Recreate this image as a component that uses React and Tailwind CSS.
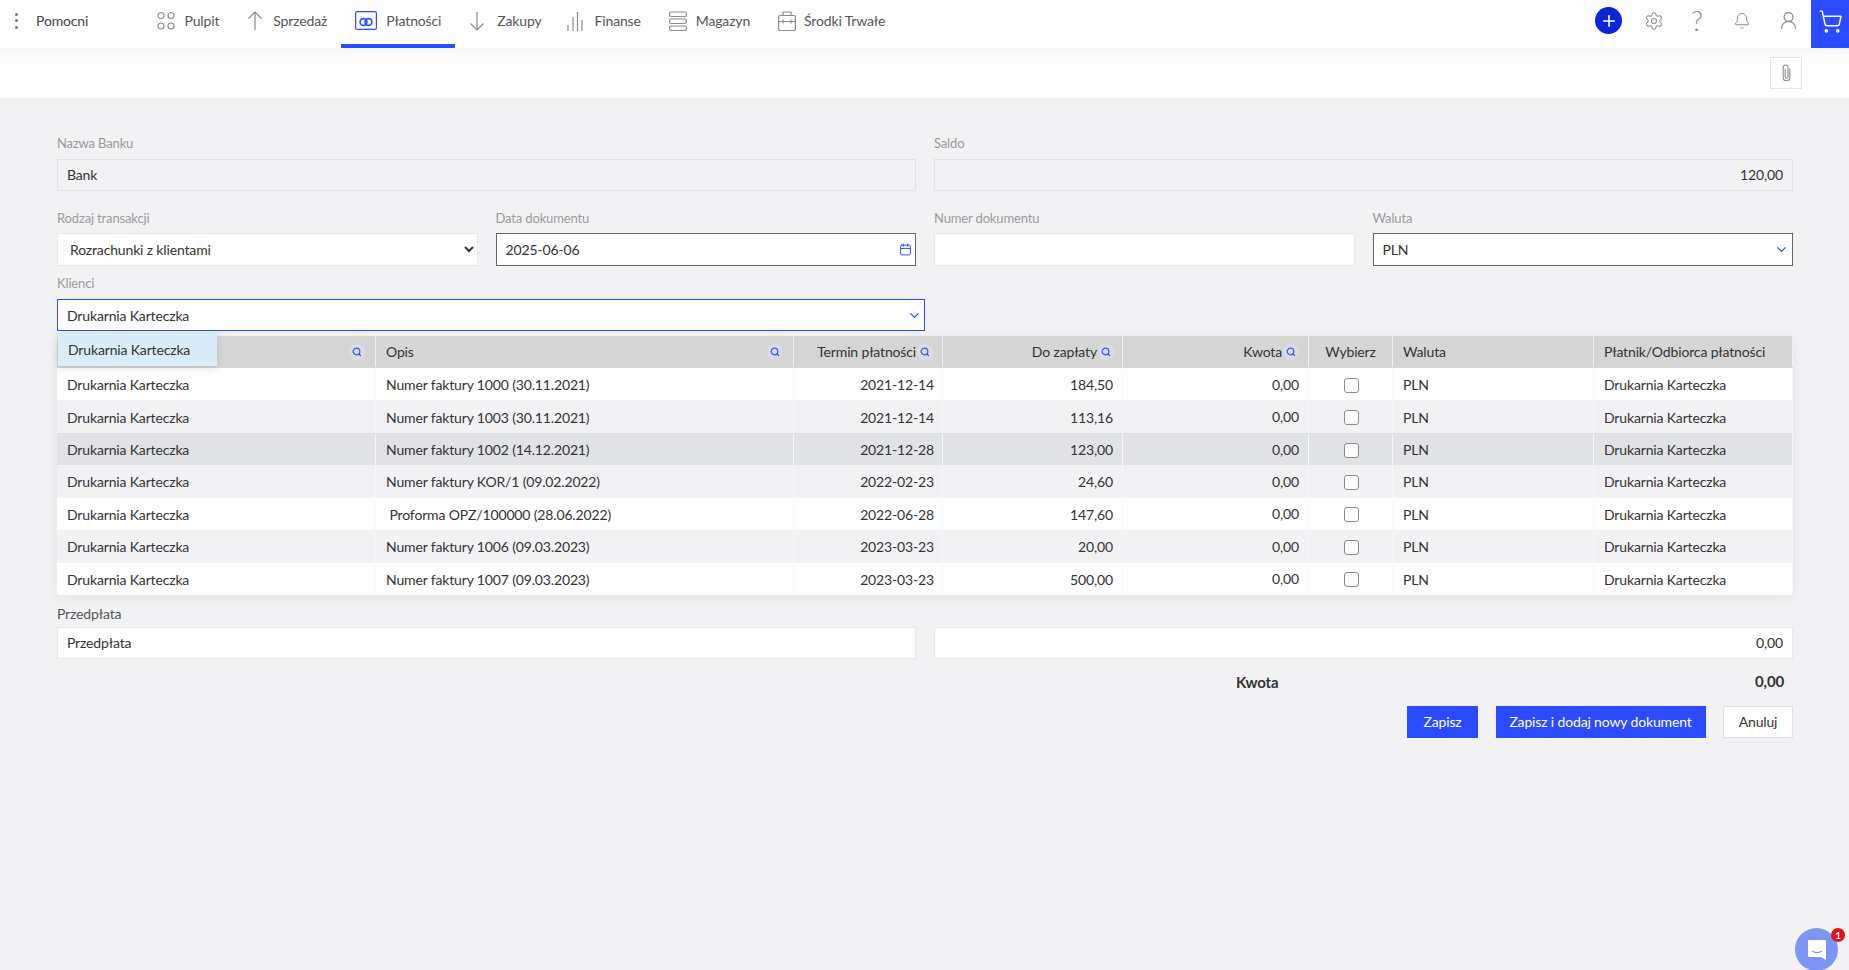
import React from "react";
import { Settings, Bell, ShoppingCart, Plus, ChevronDown, Calendar, UserRound } from "lucide-react";

const rows = [
    { opis: "Numer faktury 1000 (30.11.2021)", termin: "2021-12-14", kwota: "184,50" },
    { opis: "Numer faktury 1003 (30.11.2021)", termin: "2021-12-14", kwota: "113,16" },
    { opis: "Numer faktury 1002 (14.12.2021)", termin: "2021-12-28", kwota: "123,00" },
    { opis: "Numer faktury KOR/1 (09.02.2022)", termin: "2022-02-23", kwota: "24,60" },
    { opis: "\u00a0Proforma OPZ/100000 (28.06.2022)", termin: "2022-06-28", kwota: "147,60" },
    { opis: "Numer faktury 1006 (09.03.2023)", termin: "2023-03-23", kwota: "20,00" },
    { opis: "Numer faktury 1007 (09.03.2023)", termin: "2023-03-23", kwota: "500,00" },
];

const grid = "grid grid-cols-[319px_418px_149px_180px_186px_84px_201px_199px]";

function Ico({ w = 18, children }) {
    return (
        <svg width={w} height="20" viewBox={`0 0 ${w} 20`} fill="none" stroke="#8c8c8c" strokeWidth="1.2" className="shrink-0">
            {children}
        </svg>
    );
}

function NavItem({ icon, label, active, className = "gap-[10px] pl-[14px]" }) {
    return (
        <div className={`relative flex h-12 items-center pb-[7px] pr-[14px] text-[#555] ${className}`}>
            {icon}
            <span>{label}</span>
            {active && <div className="absolute bottom-0 left-0 right-0 h-1 bg-[#2b4bff]" />}
        </div>
    );
}

function Q() {
    return (
        <span className="flex h-4 w-4 items-center justify-center rounded-full bg-[#dbdde6]">
            <svg width="10" height="10" viewBox="0 0 10 10" fill="none" stroke="#3b5bff" strokeWidth="1.3">
                <circle cx="4.500" cy="4.500" r="3.300" />
                <path d="M6.500 6.500 9 9" />
            </svg>
        </span>
    );
}

function Label({ children, className = "" }) {
    return <div className={`flex items-center pb-[5px] text-[13px] text-[#999] ${className}`}>{children}</div>;
}

function Box({ className = "", children }) {
    return <div className={`flex items-center border px-[9px] ${className}`}>{children}</div>;
}

export default function App() {
    return (
        <div className="min-h-[970px] bg-[#f2f2f5] font-['Lato',sans-serif] text-[14px] tracking-[-0.15px] text-[#333]">
            <nav className="flex h-12 items-center bg-[#fdfdfd]">
                <div className="flex w-[142.5px] items-center pb-[7px]">
                    <div className="ml-[15px] flex w-[21px] flex-col gap-[3.5px]">
                        <span className="h-[3px] w-[3px] rounded-full bg-[#777]" />
                        <span className="h-[3px] w-[3px] rounded-full bg-[#777]" />
                        <span className="h-[3px] w-[3px] rounded-full bg-[#777]" />
                    </div>
                    <span className="text-[#444]">Pomocni</span>
                </div>
                <NavItem label="Pulpit" icon={
                    <Ico w={18}>
                        <circle cx="4" cy="4.500" r="3" /><circle cx="14" cy="4.500" r="3" />
                        <circle cx="4" cy="15" r="3" /><circle cx="14" cy="15" r="3" />
                    </Ico>
                } />
                <NavItem label="Sprzedaż" icon={
                    <Ico w={16}><path d="M8 19V1M1.500 7.500 8 1l6.500 6.500" /></Ico>
                } />
                <NavItem active label="Płatności" className="gap-[9px] pl-[14px]" icon={
                    <svg width="22" height="19" viewBox="0 0 22 19" fill="none" stroke="#2b4bff" strokeWidth="1.2" className="shrink-0">
                        <rect x="0.6" y="0.6" width="20.800" height="17.800" rx="1.500" />
                        <circle cx="8.500" cy="11" r="3.400" strokeWidth="1.600" />
                        <circle cx="13.500" cy="11" r="3.400" strokeWidth="1.600" />
                    </svg>
                } />
                <NavItem label="Zakupy" className="gap-[12px] pl-[14px]" icon={
                    <Ico w={16}><path d="M8 1v18M1.500 12.500 8 19l6.500-6.500" /></Ico>
                } />
                <NavItem label="Finanse" className="gap-[12px] pl-[11px]" icon={
                    <Ico w={16}><path d="M1 14v6M6 6v14M10.500 1v19M15 9v11" /></Ico>
                } />
                <NavItem label="Magazyn" className="gap-[9px] pl-[14px]" icon={
                    <Ico w={18}>
                        <rect x="0.6" y="1" width="16.800" height="4.500" rx="1.500" />
                        <rect x="0.6" y="8" width="16.800" height="4.500" rx="1.500" />
                        <rect x="0.6" y="15" width="16.800" height="4.500" rx="1.500" />
                    </Ico>
                } />
                <NavItem label="Środki Trwałe" className="gap-[8px] pl-[14px]" icon={
                    <Ico w={18}>
                        <rect x="0.6" y="4.500" width="16.800" height="15" rx="1.500" />
                        <path d="M5 4.500V1h8v3.500M1 10.500h16M5 8.500v4M13 8.500v4" />
                    </Ico>
                } />
                <div className="ml-auto flex items-center">
                    <div className="mb-[7px] mr-[9px] flex h-[27px] w-[27px] items-center justify-center rounded-full bg-[#0a26d6]">
                        <Plus size={18} color="#fff" strokeWidth={2.2} />
                    </div>
                    <div className="mb-[7px] flex w-[45px] justify-center"><Settings size={20} color="#8c8c8c" strokeWidth={1.3} /></div>
                    <div className="mb-[7px] flex w-[42px] justify-center text-[27px] font-light leading-none text-[#8c8c8c]">?</div>
                    <div className="mb-[7px] flex w-[48px] justify-center"><Bell size={18} color="#8c8c8c" strokeWidth={1.3} /></div>
                    <div className="mb-[7px] flex w-[45px] justify-center"><UserRound size={21} color="#8c8c8c" strokeWidth={1.4} /></div>
                    <div className="flex h-12 w-[38px] items-center justify-center bg-[#2b4bff] pb-[5px]">
                        <ShoppingCart size={25} color="#fff" strokeWidth={1.4} />
                    </div>
                </div>
            </nav>

            <div className="flex h-[50px] items-start justify-end bg-[linear-gradient(#f6f6f7,#fdfdfd_12px)] pr-[47px] pt-[9px]">
                <div className="flex h-8 w-8 items-center justify-center border border-[#e2e2e6] bg-[#fdfdfd]">
                    <svg width="9" height="18" viewBox="0 0 9 18" fill="none" stroke="#8c8c8c" strokeWidth="1.1">
                        <path d="M7.800 4.500v9a3.300 3.300 0 0 1-6.600 0V3.400a2.400 2.400 0 0 1 4.800 0v9.400a1.400 1.400 0 0 1-2.800 0V5" />
                    </svg>
                </div>
            </div>

            <main className="pl-[57px] pr-[56px] pt-[36px]">
                <div className="grid grid-cols-4 gap-x-[18px]">
                    <div className="col-span-2">
                        <Label className="h-[25px]">Nazwa Banku</Label>
                        <Box className="h-8 border-[#e2e2e6] bg-[#f2f2f5] pb-[2px]">Bank</Box>
                    </div>
                    <div className="col-span-2">
                        <Label className="h-[25px]">Saldo</Label>
                        <Box className="h-8 justify-end border-[#e2e2e6] bg-[#f2f2f5] pb-[2px]">120,00</Box>
                    </div>
                </div>

                <div className="mt-[18px] grid grid-cols-4 gap-x-[18px]">
                    <div>
                        <Label className="h-6">Rodzaj transakcji</Label>
                        <select className="h-[33px] w-full rounded-[2px] border border-[#e8e8ec] bg-[#fdfdfd] pl-2 pr-1 text-[#333]">
                            <option>Rozrachunki z klientami</option>
                        </select>
                    </div>
                    <div>
                        <Label className="h-6">Data dokumentu</Label>
                        <Box className="h-[33px] justify-between border-[#666] bg-[#fdfdfd] pr-[3px]">
                            2025-06-06
                            <Calendar size={13} color="#2b4bff" strokeWidth={1.8} />
                        </Box>
                    </div>
                    <div>
                        <Label className="h-6">Numer dokumentu</Label>
                        <Box className="h-[33px] rounded-[2px] border-[#e8e8ec] bg-[#fdfdfd]" />
                    </div>
                    <div>
                        <Label className="h-6">Waluta</Label>
                        <Box className="h-[33px] justify-between border-[#666] bg-[#fdfdfd] pr-[3px]">
                            PLN
                            <ChevronDown size={15} color="#2b4bff" strokeWidth={2} />
                        </Box>
                    </div>
                </div>

                <Label className="mt-[7px] h-[26px]">Klienci</Label>
                <div className="relative w-[868px]">
                    <Box className="h-8 justify-between border-[#2b4bff] bg-[#fdfdfd] pr-[2px]">
                        Drukarnia Karteczka
                        <ChevronDown size={15} color="#2b4bff" strokeWidth={2} />
                    </Box>
                    <div className="absolute left-[1px] top-[33px] z-10 flex h-[34px] w-[159px] items-center bg-[#d9edf9] pl-[10px] text-[#333] shadow-[0_2px_8px_rgba(0,0,0,0.12)]">
                        Drukarnia Karteczka
                    </div>
                </div>

                <div className="mt-[5px] overflow-hidden rounded-[3px] shadow-[0_3px_12px_rgba(0,0,0,0.06)]">
                    <div className={`${grid} h-8 bg-[#d5d5d5] pb-[1px] text-[#333] [&>div]:flex [&>div]:items-center [&>div]:border-r [&>div]:border-[#f2f2f5]`}>
                        <div className="justify-end pr-[10px]"><Q /></div>
                        <div className="justify-between px-[10px]">Opis<Q /></div>
                        <div className="justify-end gap-[1px] pr-[9px]">Termin płatności<Q /></div>
                        <div className="justify-end gap-[1px] pr-[8px]">Do zapłaty<Q /></div>
                        <div className="justify-end gap-[1px] pr-[9px]">Kwota<Q /></div>
                        <div className="justify-center">Wybierz</div>
                        <div className="px-[10px]">Waluta</div>
                        <div className="px-[10px]">Płatnik/Odbiorca płatności</div>
                    </div>
                    {rows.map((row, i) => (
                        <div
                            key={i}
                            className={`${grid} h-[32.43px] pt-[1px] ${i === 2 ? "bg-[#e1e2e6]" : i % 2 === 0 ? "bg-[#fdfdfd]" : "bg-[#f2f2f5]"} [&>div]:flex [&>div]:items-center [&>div]:border-r [&>div]:border-[#f7f7f9]`}
                        >
                            <div className="px-[10px]">Drukarnia Karteczka</div>
                            <div className="whitespace-pre px-[10px]">{row.opis}</div>
                            <div className="justify-end pr-[8px]">{row.termin}</div>
                            <div className="justify-end pr-[9px]">{row.kwota}</div>
                            <div className="justify-end pb-[1px] pr-[9px]">0,00</div>
                            <div className="justify-center pl-[1px] pt-[1px]">
                                <span className="h-[15px] w-[15px] rounded-[3px] border-[1.5px] border-[#8a8a8a] bg-[#fdfdfd]" />
                            </div>
                            <div className="px-[10px]">PLN</div>
                            <div className="px-[10px]">Drukarnia Karteczka</div>
                        </div>
                    ))}
                </div>

                <div className="mt-2 flex h-6 items-center pb-[2px] text-[#555]">Przedpłata</div>
                <div className="grid grid-cols-2 gap-x-[18px]">
                    <Box className="h-[32px] border-[#e8e8ec] bg-[#fdfdfd]">Przedpłata</Box>
                    <Box className="h-[32px] justify-end border-[#e8e8ec] bg-[#fdfdfd]">0,00</Box>
                </div>

                <div className="mt-[11px] flex h-6 items-center text-[15px] font-bold">
                    <span className="ml-[1179px] pt-[1px]">Kwota</span>
                    <span className="ml-auto pb-[2px] pr-[9px]">0,00</span>
                </div>

                <div className="mt-[12px] flex justify-end gap-[17.500px]">
                    <button className="h-8 w-[71px] bg-[#2b4bff] text-white">Zapisz</button>
                    <button className="h-8 w-[210px] bg-[#2b4bff] text-white">Zapisz i dodaj nowy dokument</button>
                    <button className="h-8 w-[70px] border border-[#e2e2e6] bg-[#fdfdfd] text-[#333]">Anuluj</button>
                </div>
            </main>

            <div className="fixed bottom-[-1px] left-[1795px] flex h-[43px] w-[43px] items-center justify-center rounded-full bg-[#7b96f5]">
                <svg width="20" height="22" viewBox="0 0 20 22">
                    <path d="M2 1h16a1 1 0 0 1 1 1v19l-5-3H2a1 1 0 0 1-1-1V2a1 1 0 0 1 1-1Z" fill="#fff" />
                    <path d="M5 12c3 2 7 2 10 0" stroke="#7b96f5" strokeWidth="1.200" fill="none" />
                </svg>
                <span className="absolute -right-[7px] top-0 flex h-[14px] w-[14px] items-center justify-center rounded-full bg-[#e0131d] text-[10px] font-bold text-white">1</span>
            </div>
        </div>
    );
}
